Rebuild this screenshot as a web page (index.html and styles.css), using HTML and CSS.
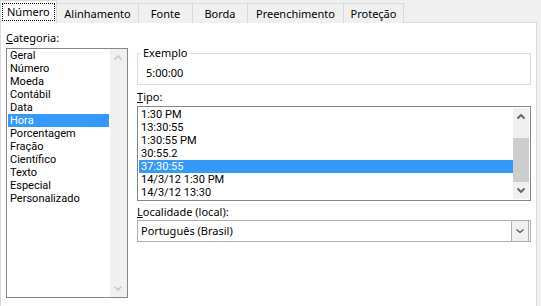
FILE: index.html
```html
<!DOCTYPE html>
<html lang="pt-BR">
<head>
<meta charset="utf-8">
<title>Formatar Células</title>
<link rel="stylesheet" href="styles.css">
</head>
<body>
<div class="tabs">
  <div class="tab tab-active"><span class="focus">Número</span></div>
  <div class="tab t-alin">Alinhamento</div>
  <div class="tab t-fonte">Fonte</div>
  <div class="tab t-borda">Borda</div>
  <div class="tab t-preen">Preenchimento</div>
  <div class="tab t-prot">Proteção</div>
</div>
<div class="panel">
  <div class="col-left">
    <div class="label"><u>C</u>ategoria:</div>
    <div class="listbox cat-list">
      <ul class="items">
        <li>Geral</li>
        <li>Número</li>
        <li>Moeda</li>
        <li>Contábil</li>
        <li>Data</li>
        <li class="sel">Hora</li>
        <li>Porcentagem</li>
        <li>Fração</li>
        <li>Científico</li>
        <li>Texto</li>
        <li>Especial</li>
        <li>Personalizado</li>
      </ul>
      <div class="vscroll disabled">
        <svg class="arrow" width="16" height="17" viewBox="0 0 16 17"><polyline points="4.5,10.5 8,7 11.5,10.5" fill="none" stroke="currentColor" stroke-width="1.6"/></svg>
        <div class="track"></div>
        <svg class="arrow" width="16" height="17" viewBox="0 0 16 17"><polyline points="4.5,6.5 8,10 11.5,6.5" fill="none" stroke="currentColor" stroke-width="1.6"/></svg>
      </div>
    </div>
  </div>
  <div class="col-right">
    <fieldset class="group">
      <legend>Exemplo</legend>
      <div class="sample">5:00:00</div>
    </fieldset>
    <div class="label label-tipo"><u>T</u>ipo:</div>
    <div class="listbox tipo-list">
      <ul class="items">
        <li>1:30 PM</li>
        <li>13:30:55</li>
        <li>1:30:55 PM</li>
        <li>30:55.2</li>
        <li class="sel">37:30:55</li>
        <li>14/3/12 1:30 PM</li>
        <li>14/3/12 13:30</li>
      </ul>
      <div class="vscroll">
        <svg class="arrow" width="16" height="17" viewBox="0 0 16 17"><polyline points="4.5,10.5 8,7 11.5,10.5" fill="none" stroke="currentColor" stroke-width="1.8"/></svg>
        <div class="track"><div class="thumb"></div></div>
        <svg class="arrow" width="16" height="17" viewBox="0 0 16 17"><polyline points="4.5,6.5 8,10 11.5,6.5" fill="none" stroke="currentColor" stroke-width="1.8"/></svg>
      </div>
    </div>
    <div class="label label-loc"><u>L</u>ocalidade (local):</div>
    <div class="combo">
      <div class="combo-text">Português (Brasil)</div>
      <div class="combo-btn">
        <svg width="16" height="20" viewBox="0 0 16 20"><polyline points="4.5,8.5 8,11.5 11.5,8.5" fill="none" stroke="#505050" stroke-width="1.1"/></svg>
      </div>
    </div>
  </div>
</div>
</body>
</html>
```

FILE: styles.css
```css
* { box-sizing: border-box; }

html, body {
  margin: 0;
  padding: 0;
  background: #f0f0f0;
  font-family: "Noto Sans", "Open Sans", sans-serif;
  font-size: 11px;
  color: #000;
  overflow: hidden;
}

.tabs {
  display: flex;
  align-items: flex-end;
  height: 23px;
  position: relative;
  z-index: 1;
}

.tab {
  height: 20px;
  line-height: 18px;
  border: 1px solid #d9d9d9;
  border-bottom: none;
  border-left: none;
  background: #f0f0f0;
  text-align: center;
  padding-top: 1px;
  white-space: nowrap;
}

.tab-active {
  width: 57px;
  height: 23px;
  background: #fff;
  border-left: 1px solid #d9d9d9;
  padding: 2px 1px 0 1px;
  line-height: 16px;
  text-align: left;
}

.focus {
  display: block;
  width: 53px;
  height: 18px;
  border: 1px dotted #000;
  padding-left: 4px;
  line-height: 16px;
}

.t-alin { width: 82px; }
.t-fonte { width: 54px; }
.t-borda { width: 55px; }
.t-preen { width: 96px; }
.t-prot { width: 60px; }

.panel {
  width: 537px;
  height: 290px;
  margin-top: -1px;
  background: #fff;
  border: 1px solid #d9d9d9;
  display: grid;
  grid-template-columns: 122px 394px;
  column-gap: 9px;
  padding: 7px 5px 0 5px;
  align-items: start;
}

.label {
  height: 16px;
  line-height: 16px;
  white-space: nowrap;
}

.listbox {
  display: flex;
  border: 1px solid #828790;
  background: #fff;
}

.cat-list {
  margin-top: 2px;
  height: 250px;
}

.items {
  list-style: none;
  margin: 0;
  padding: 0 1px;
  flex: 1;
  font-family: Roboto, "Noto Sans", sans-serif;
  font-size: 11px;
}

.items li {
  height: 13px;
  line-height: 12px;
  padding: 1px 0 0 2px;
  white-space: nowrap;
}

.items li.sel {
  background: #3399ff;
  color: #fff;
}

.vscroll {
  width: 16px;
  margin: 0 1px 0 0;
  background: #f0f0f0;
  display: flex;
  flex-direction: column;
  color: #606060;
}

.cat-list .vscroll {
  margin: 0;
  width: 17px;
}

.vscroll.disabled {
  color: #c8c8c8;
}

.arrow {
  display: block;
  flex: none;
}

.track {
  flex: 1;
  position: relative;
}

.thumb {
  position: absolute;
  left: 0;
  right: 0;
  top: 13px;
  height: 44px;
  background: #cdcdcd;
}

.col-right {
  padding-top: 15px;
}

.group {
  margin: 0;
  height: 40px;
  border: 1px solid #dcdcdc;
  padding: 4px 3px 3px 3px;
}

.group legend {
  padding: 0 2px;
  height: 16px;
  line-height: 16px;
}

.sample {
  height: 16px;
  line-height: 16px;
  margin-left: 5px;
}

.label-tipo { margin-top: 4px; }

.tipo-list {
  margin-top: 1px;
  height: 95px;
  padding: 1px 0;
}

.tipo-list .items { padding-right: 0; }

.label-loc { margin-top: 3px; }

.combo {
  display: flex;
  height: 22px;
  border: 1px solid #adadad;
  background: #fff;
}

.combo-text {
  flex: 1;
  line-height: 20px;
  padding-left: 3px;
}

.combo-btn {
  width: 18px;
  margin-right: 1px;
  border: 1px solid #adadad;
  border-top: none;
  border-bottom: none;
  background: #f0f0f0;
  display: flex;
  align-items: center;
  justify-content: center;
}

.combo-btn svg { display: block; }
```
